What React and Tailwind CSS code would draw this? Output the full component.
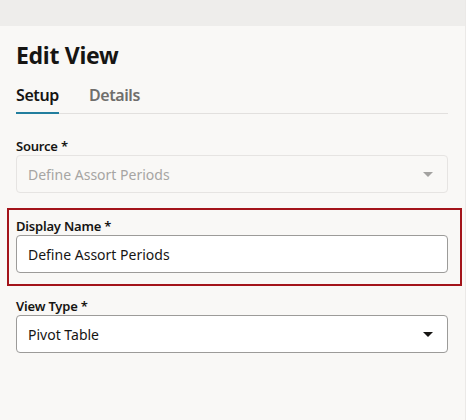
import { useState } from "react";

const font = { fontFamily: '"Noto Sans", "Open Sans", sans-serif' };

const Caret = ({ className }) => (
  <svg width="10" height="5" viewBox="0 0 10 5" className={className}>
    <path d="M0 0h10L5 5z" fill="currentColor" />
  </svg>
);

const Label = ({ children }) => (
  <label className="block text-[13px] leading-[16px] font-semibold text-[#161513] tracking-[-0.2px]">
    {children}
  </label>
);

const App = () => {
  const [tab, setTab] = useState("setup");
  const [name, setName] = useState("Define Assort Periods");

  return (
    <div className="flex w-[471px] h-[420px] bg-white overflow-hidden" style={font}>
      <div className="flex flex-col w-[466px] h-full bg-[#f9f8f6] border-r border-[#ebe9e7]">
        {/* blurred page behind the drawer */}
        <div className="h-[26px] bg-[#eeedeb]" />

        <div className="pl-4 pr-[17px]">
          <h1 className="mt-[14px] text-[23px] leading-[30px] font-bold text-[#161513] tracking-[-0.3px]">
            Edit View
          </h1>

          {/* Tabs */}
          <div className="mt-[15px] flex gap-[30px] border-b border-[#e2e0de]">
            <button
              onClick={() => setTab("setup")}
              className={`pb-[7px] text-[16px] leading-[20px] font-semibold tracking-[-0.4px] border-b-2 -mb-px ${
                tab === "setup" ? "border-[#227e9e] text-[#161513]" : "border-transparent text-[#6f6e6c]"
              }`}
            >
              Setup
            </button>
            <button
              onClick={() => setTab("details")}
              className={`pb-[7px] text-[16px] leading-[20px] font-semibold tracking-[-0.4px] border-b-2 -mb-px ${
                tab === "details" ? "border-[#227e9e] text-[#161513]" : "border-transparent text-[#6f6e6c]"
              }`}
            >
              Details
            </button>
          </div>

          {/* Source (read only) */}
          <div className="mt-[24px] w-[432px]">
            <Label>Source *</Label>
            <div className="mt-px flex items-center justify-between h-[38px] px-[11px] rounded-[4px] border border-[#e6e4e2] text-[14px] text-[#a6a5a3]">
              <span>Define Assort Periods</span>
              <Caret className="mr-[3px] text-[#a3a2a0]" />
            </div>
          </div>
        </div>

        {/* Display Name, outlined in red */}
        <div className="mt-[15px] ml-[7px] w-[455px] border-2 border-[#a3141a] pl-[7px] pt-[8px] pb-[11px]">
          <Label>Display Name *</Label>
          <input
            value={name}
            onChange={(e) => setName(e.target.value)}
            className="mt-px block w-[432px] h-[38px] px-[11px] rounded-[4px] border border-[#9c9b99] bg-white text-[14px] text-[#161513] outline-none"
          />
        </div>

        {/* View Type */}
        <div className="mt-[12px] pl-4 w-[448px]">
          <Label>View Type *</Label>
          <div className="mt-px flex items-center justify-between w-[432px] h-[38px] px-[11px] rounded-[4px] border border-[#9c9b99] bg-white text-[14px] text-[#161513]">
            <span>Pivot Table</span>
            <Caret className="mr-[3px] text-[#161513]" />
          </div>
        </div>
      </div>
    </div>
  );
};

export default App;
